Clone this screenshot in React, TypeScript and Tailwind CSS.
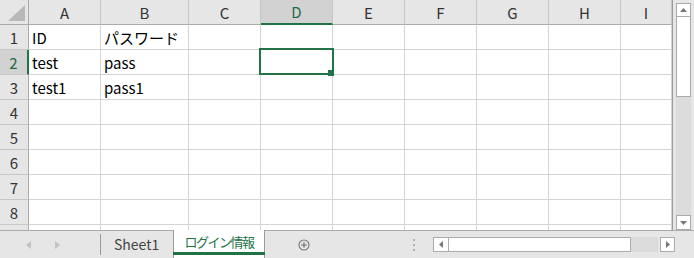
import React from "react";

const columns = [
  { name: "A", w: "w-[72px]" },
  { name: "B", w: "w-[88px]" },
  { name: "C", w: "w-[72px]" },
  { name: "D", w: "w-[72px]" },
  { name: "E", w: "w-[72px]" },
  { name: "F", w: "w-[72px]" },
  { name: "G", w: "w-[72px]" },
  { name: "H", w: "w-[72px]" },
  { name: "I", w: "w-[51px]" },
];

const data: Record<number, string[]> = {
  1: ["ID", "パスワード"],
  2: ["test", "pass"],
  3: ["test1", "pass1"],
};

const SELECTED_COL = 3;
const SELECTED_ROW = 2;
// last row is only a few pixels tall, its number is hidden under the tab bar
const VISIBLE_ROWS = 8;

const font = "font-['Noto_Sans_CJK_JP','Noto_Sans',sans-serif]";

const App: React.FC = () => {
  const rows = [1, 2, 3, 4, 5, 6, 7, 8, 9];

  return (
    <div className={`w-[694px] h-[258px] flex flex-col bg-[#e6e6e6] overflow-hidden ${font}`}>
      {/* grid + vertical scrollbar */}
      <div className="flex h-[230px]">
        <div className="w-[672px] h-[230px] overflow-hidden bg-white border-r border-[#9b9b9b] box-content">
          {/* column headers */}
          <div className="flex h-[25px] bg-[#e6e6e6]">
            <div className="w-[29px] h-[25px] border-r border-b border-[#ababab] relative shrink-0">
              <svg className="absolute left-[8px] top-[5px]" width="17" height="16" viewBox="0 0 17 16">
                <polygon points="17,0 17,16 0,16" fill="#b8b8b8" />
              </svg>
            </div>
            {columns.map((c, i) => (
              <div
                key={c.name}
                className={`${c.w} h-[25px] shrink-0 flex items-center justify-center text-[15px] leading-none border-r border-[#c6c6c6] ${
                  i === SELECTED_COL
                    ? "bg-[#d2d2d2] text-[#1e6b41] border-b-2 border-b-[#217346]"
                    : "text-[#333] border-b border-b-[#ababab]"
                }`}
              >
                {c.name}
              </div>
            ))}
          </div>
          {/* rows */}
          {rows.map((r) => (
            <div key={r} className="flex h-[25px]">
              <div
                className={`w-[29px] h-[25px] shrink-0 flex items-center justify-center text-[15px] leading-none border-b border-[#c6c6c6] ${
                  r === SELECTED_ROW
                    ? "bg-[#d2d2d2] text-[#1e6b41] border-r-2 border-r-[#217346]"
                    : "bg-[#e6e6e6] text-[#333] border-r border-r-[#ababab]"
                }`}
              >
                {r <= VISIBLE_ROWS ? r : ""}
              </div>
              {columns.map((c, i) => (
                <div
                  key={c.name}
                  className={`${c.w} h-[25px] shrink-0 border-r border-b border-[#d4d4d4] relative flex items-center pl-[3px] text-[15px] text-black leading-none whitespace-nowrap`}
                >
                  {data[r]?.[i] ?? ""}
                  {r === SELECTED_ROW && i === SELECTED_COL && (
                    <>
                      <div className="absolute z-10 left-[-2px] top-[-2px] w-[75px] h-[27px] border-2 border-[#217346]" />
                      <div className="absolute z-20 right-[-2px] bottom-[-2px] w-[6px] h-[6px] bg-[#217346]" />
                    </>
                  )}
                </div>
              ))}
            </div>
          ))}
        </div>
        {/* vertical scrollbar */}
        <div className="w-[21px] h-[230px] flex flex-col pl-[3px] pt-[3px]">
          <div className="w-[15px] h-[14px] bg-white border border-[#ababab] flex items-center justify-center">
            <svg width="7" height="4" viewBox="0 0 7 4"><polygon points="3.5,0 7,4 0,4" fill="#777" /></svg>
          </div>
          <div className="w-[15px] h-[80px] bg-white border border-[#ababab] border-t-0" />
          <div className="w-[15px] flex-1 bg-[#dcdcdc]" />
          <div className="w-[15px] h-[15px] bg-white border border-[#ababab] flex items-center justify-center">
            <svg width="7" height="4" viewBox="0 0 7 4"><polygon points="0,0 7,0 3.5,4" fill="#777" /></svg>
          </div>
        </div>
      </div>

      {/* sheet tabs bar */}
      <div className="flex h-[28px] border-t border-[#ababab] items-stretch">
        <div className="w-[100px] flex items-center">
          <svg className="ml-[26px]" width="5" height="8" viewBox="0 0 5 8"><polygon points="5,0 5,8 0,4" fill="#c3c3c3" /></svg>
          <svg className="ml-[24px]" width="5" height="8" viewBox="0 0 5 8"><polygon points="0,0 5,4 0,8" fill="#c3c3c3" /></svg>
        </div>
        <div className="w-[73px] flex items-center border-l border-[#9b9b9b] my-[3px]">
          <span className="ml-[13px] text-[14px] text-[#444]">Sheet1</span>
        </div>
        <div className="w-[92px] -mt-px bg-white border-x border-[#9b9b9b] flex flex-col">
          <div className="flex-1 flex items-center justify-center text-[13px] tracking-[-1.5px] text-[#217346] pt-[1px] whitespace-nowrap">
            ログイン情報
          </div>
          <div className="h-[3px] mb-[3px] bg-[#217346] -mx-px" />
        </div>
        <div className="w-[150px] flex items-center">
          <svg className="ml-[33px]" width="16" height="16" viewBox="0 0 16 16">
            <circle cx="8" cy="8" r="6.7" fill="none" stroke="#777" strokeWidth="1.5" />
            <line x1="8" y1="4.3" x2="8" y2="11.7" stroke="#777" strokeWidth="1.6" />
            <line x1="4.3" y1="8" x2="11.7" y2="8" stroke="#777" strokeWidth="1.6" />
          </svg>
          <div className="ml-[103px] flex flex-col gap-[3px]">
            <div className="w-[2px] h-[2px] bg-[#b0b0b0]" />
            <div className="w-[2px] h-[2px] bg-[#b0b0b0]" />
            <div className="w-[2px] h-[2px] bg-[#b0b0b0]" />
          </div>
        </div>
        {/* horizontal scrollbar */}
        <div className="flex items-center ml-[18px]">
          <div className="w-[16px] h-[15px] bg-white border border-[#ababab] flex items-center justify-center">
            <svg width="4" height="7" viewBox="0 0 4 7"><polygon points="4,0 4,7 0,3.5" fill="#777" /></svg>
          </div>
          <div className="w-[182px] h-[15px] bg-white border border-[#ababab] border-l-0" />
          <div className="w-[27px] h-[15px] bg-[#dcdcdc]" />
          <div className="w-[15px] h-[15px] ml-[2px] bg-white border border-[#ababab] flex items-center justify-center">
            <svg width="4" height="7" viewBox="0 0 4 7"><polygon points="0,0 4,3.5 0,7" fill="#777" /></svg>
          </div>
        </div>
      </div>
    </div>
  );
};

export default App;
